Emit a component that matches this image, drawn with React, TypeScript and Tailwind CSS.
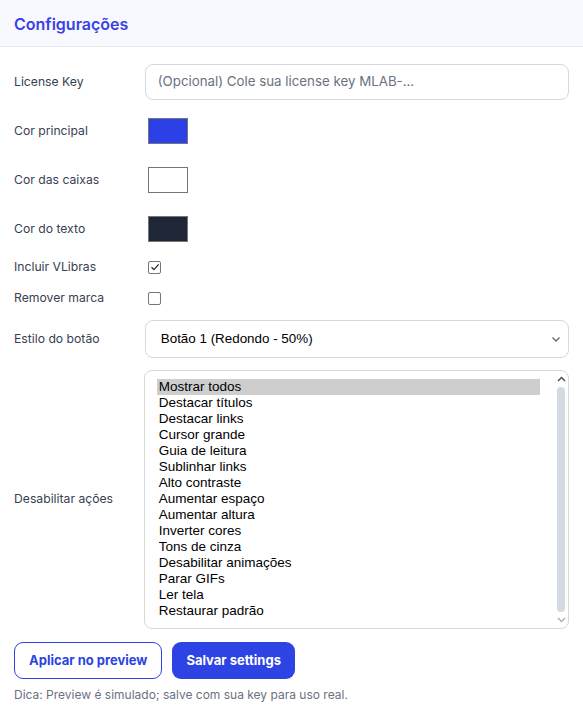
import { useState } from 'react';

const acoes = [
  'Mostrar todos',
  'Destacar títulos',
  'Destacar links',
  'Cursor grande',
  'Guia de leitura',
  'Sublinhar links',
  'Alto contraste',
  'Aumentar espaço',
  'Aumentar altura',
  'Inverter cores',
  'Tons de cinza',
  'Desabilitar animações',
  'Parar GIFs',
  'Ler tela',
  'Restaurar padrão',
];

const Swatch = ({ color }: { color: string }) => (
  <div className="w-[40px] h-[26px] border border-[#767676] ml-[3px]" style={{ background: color }} />
);

const Check = ({ checked }: { checked?: boolean }) => (
  <div className="w-[13px] h-[13px] border border-[#767676] rounded-[2px] bg-white ml-[3px] flex items-center justify-center">
    {checked && (
      <svg width="10" height="10" viewBox="0 0 10 10" fill="none">
        <path d="M1.5 5.2 L4 7.6 L8.6 2.4" stroke="#333" strokeWidth="1.4" />
      </svg>
    )}
  </div>
);

export default function App() {
  const [selected, setSelected] = useState(0);

  return (
    <div className="w-[583px] min-h-[717px] bg-white font-['Inter',sans-serif] text-[#374151]">
      {/* header */}
      <div className="h-[47px] bg-[#f8f9fe] border-b border-[#e8eaf2] flex items-center px-[14px]">
        <h1 className="text-[16px] font-semibold text-[#3b41e3] mt-[1px]">Configurações</h1>
      </div>

      <div className="px-[14px] pt-[17px]">
        <div className="flex items-center h-[36px]">
          <label className="w-[131px] text-[12.2px]">License Key</label>
          <div className="w-[425px] h-[36px] border border-[#d6d8de] rounded-[8px] flex items-center px-[12px]">
            <span className="text-[13.3px] text-[#6b7280]">(Opcional) Cole sua license key MLAB-...</span>
          </div>
        </div>

        <div className="flex items-center mt-[18px] h-[26px]">
          <label className="w-[131px] text-[12.2px]">Cor principal</label>
          <Swatch color="#2b40e6" />
        </div>
        <div className="flex items-center mt-[23px] h-[26px]">
          <label className="w-[131px] text-[12.2px]">Cor das caixas</label>
          <Swatch color="#ffffff" />
        </div>
        <div className="flex items-center mt-[23px] h-[26px]">
          <label className="w-[131px] text-[12.2px]">Cor do texto</label>
          <Swatch color="#1f2637" />
        </div>

        <div className="flex items-center mt-[18px] h-[14px]">
          <label className="w-[131px] text-[12.2px]">Incluir VLibras</label>
          <Check checked />
        </div>
        <div className="flex items-center mt-[17px] h-[14px]">
          <label className="w-[131px] text-[12.2px]">Remover marca</label>
          <Check />
        </div>

        <div className="flex items-center mt-[15px] h-[38px]">
          <label className="w-[131px] text-[12.2px]">Estilo do botão</label>
          <div className="w-[425px] h-[38px] border border-[#d6d8de] rounded-[8px] flex items-center justify-between pl-[15px] pr-[7px] font-['Liberation_Sans',Arial,sans-serif] text-[13.4px] text-black">
            <span>Botão 1 (Redondo - 50%)</span>
            <svg width="10" height="10" viewBox="0 0 10 10" fill="none">
              <path d="M1.5 3.5 L5 7 L8.5 3.5" stroke="#666" strokeWidth="1.3" />
            </svg>
          </div>
        </div>

        <div className="flex items-center mt-[12px]">
          <label className="w-[130px] text-[12.2px]">Desabilitar ações</label>
          <div className="w-[426px] h-[259px] border border-[#d6d8de] rounded-[8px] flex pl-[12px] pt-[8px] pr-[2px] overflow-hidden">
            <ul className="flex-1 font-['Liberation_Sans',Arial,sans-serif] text-[13.5px] text-black leading-[16px]">
              {acoes.map((a, i) => (
                <li
                  key={a}
                  onClick={() => setSelected(i)}
                  className={`px-[2px] h-[16px] ${selected === i ? 'bg-[#cecece]' : ''}`}
                >
                  {a}
                </li>
              ))}
            </ul>
            <div className="w-[10px] ml-[16px] flex flex-col items-center -mt-[3px]">
              <svg width="9" height="7" viewBox="0 0 9 7" fill="none">
                <path d="M1 5 L4.5 1.5 L8 5" stroke="#505050" strokeWidth="1.5" />
              </svg>
              <div className="w-[8px] h-[225px] mt-[4px] rounded-full bg-[#d3dae3]" />
              <svg width="9" height="7" viewBox="0 0 9 7" fill="none" className="mt-[4px]">
                <path d="M1 2 L4.5 5.5 L8 2" stroke="#b0b0b0" strokeWidth="1.5" />
              </svg>
            </div>
          </div>
        </div>

        <div className="flex gap-[10px] mt-[13px]">
          <button className="h-[37px] px-[14px] border border-[#2d43e3] rounded-[9px] text-[#2d43e3] text-[13px] font-bold bg-white">
            Aplicar no preview
          </button>
          <button className="h-[37px] px-[14px] rounded-[9px] bg-[#2d43e3] text-white text-[13px] font-bold">
            Salvar settings
          </button>
        </div>

        <p className="mt-[7px] text-[12px] text-[#6b7280]">Dica: Preview é simulado; salve com sua key para uso real.</p>
      </div>
    </div>
  );
}
